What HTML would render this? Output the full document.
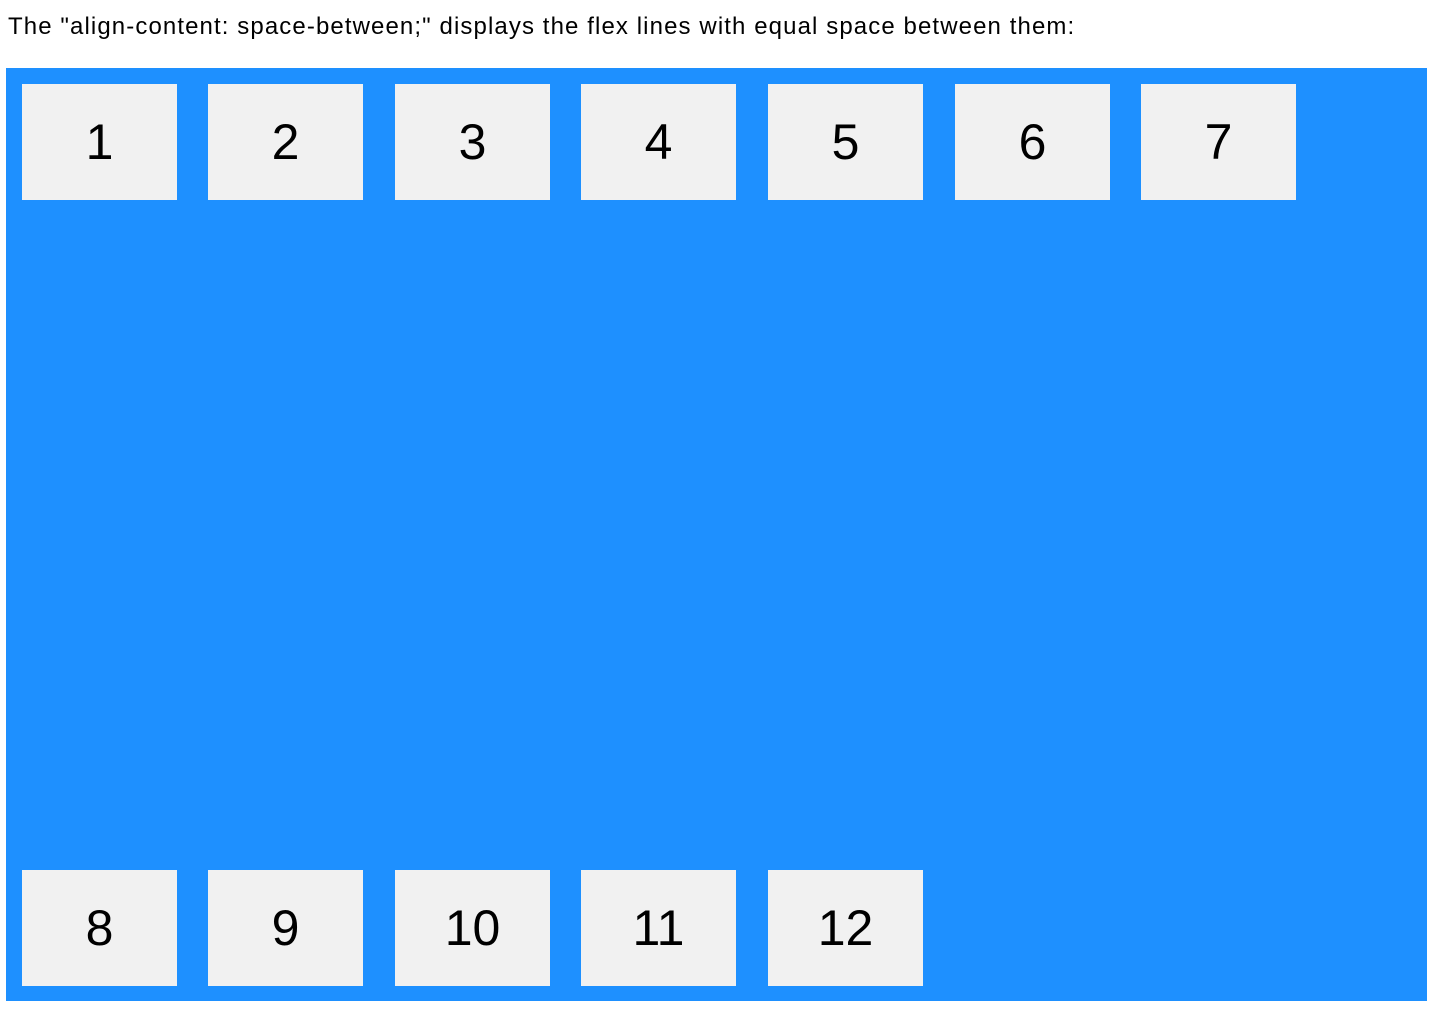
<!DOCTYPE html>
<html><head><style>
html,body{margin:0;padding:0;background:#fff;width:1440px;height:1011px;overflow:hidden}
p{position:absolute;left:8px;top:12px;margin:0;font:24px/30px "Liberation Sans",sans-serif;letter-spacing:1.1px;color:#000;white-space:nowrap}
.c{position:absolute;left:6px;top:68px;width:1421px;height:933px;background:#1e90ff}
.i{position:absolute;width:155px;height:116px;background:#f1f1f1;font:50px/116px "Liberation Sans",sans-serif;text-align:center;color:#000}
</style></head><body>
<p>The "align-content: space-between;" displays the flex lines with equal space between them:</p>
<div class="c">
<div class="i" style="left:16px;top:16px">1</div>
<div class="i" style="left:202px;top:16px">2</div>
<div class="i" style="left:389px;top:16px">3</div>
<div class="i" style="left:575px;top:16px">4</div>
<div class="i" style="left:762px;top:16px">5</div>
<div class="i" style="left:949px;top:16px">6</div>
<div class="i" style="left:1135px;top:16px">7</div>
<div class="i" style="left:16px;top:802px">8</div>
<div class="i" style="left:202px;top:802px">9</div>
<div class="i" style="left:389px;top:802px">10</div>
<div class="i" style="left:575px;top:802px">11</div>
<div class="i" style="left:762px;top:802px">12</div>
</div>
</body></html>
